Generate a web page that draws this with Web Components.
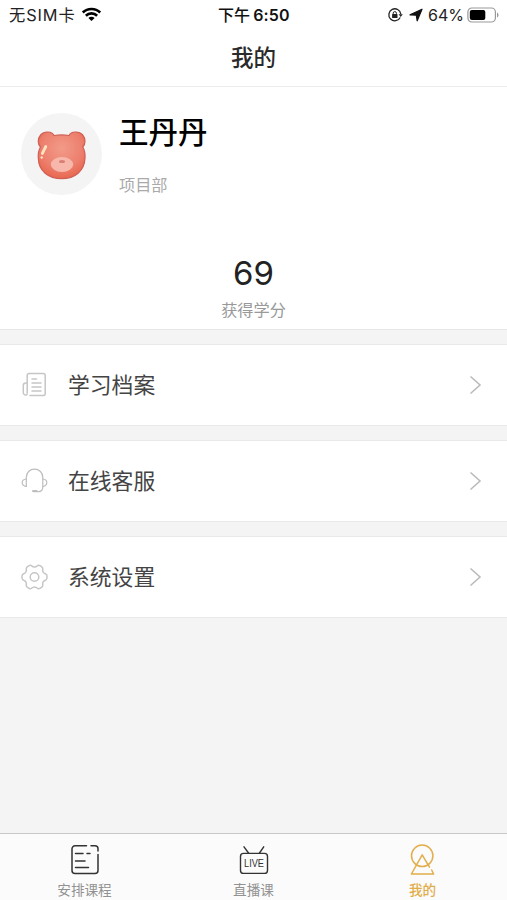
<!DOCTYPE html>
<html lang="zh-CN">
<head>
<meta charset="utf-8">
<meta name="viewport" content="width=device-width, initial-scale=1">
<title>我的</title>
<style>
  body{
    margin: 0;
    font-family: Inter, "Noto Sans CJK SC", sans-serif;
    background-color: #f4f4f4;
  }
</style>
</head>
<body>
<profile-page>
  <status-bar slot="top" carrier="无SIM卡" time="6:50" battery="64%"></status-bar>
  <nav-header slot="top">我的</nav-header>
  <user-card slot="content" score="69">
    <span slot="name">王丹丹</span>
    <span slot="dept">项目部</span>
    <span slot="label">获得学分</span>
  </user-card>
  <menu-row slot="content" icon="archive">学习档案</menu-row>
  <menu-row slot="content" icon="service">在线客服</menu-row>
  <menu-row slot="content" icon="settings">系统设置</menu-row>
  <tab-bar slot="bottom">
    <tab-item icon="course">安排课程</tab-item>
    <tab-item icon="live">直播课</tab-item>
    <tab-item icon="mine" active>我的</tab-item>
  </tab-bar>
</profile-page>

<script>
// outline of a cog with six rounded lobes, centred on 0,0
function gearPath(){
  const at = (deg, r)=>{
    const a = deg * Math.PI / 180;
    return `${(r * Math.cos(a)).toFixed(2)} ${(r * Math.sin(a)).toFixed(2)}`;
  };
  let d = `M${at(-15, 11.7)}`;
  for(let deg = 0; deg < 360; deg += 60){
    d += `C${at(deg - 10, 13.2)} ${at(deg + 10, 13.2)} ${at(deg + 15, 11.7)}`;
    d += `Q${at(deg + 30, 8.6)} ${at(deg + 45, 11.7)}`;
  }
  return d + 'Z';
}

const icons = {
  archive: `
    <svg width="28" height="28" viewBox="0 0 28 28" fill="none" stroke="#c6c6c6" stroke-width="1.5" stroke-linecap="round" stroke-linejoin="round">
      <path d="M7.200 22V4.500a2 2 0 0 1 2-2h14a2 2 0 0 1 2 2v18a2 2 0 0 1-2 2H10"/>
      <path d="M7.200 12H5.800a2.500 2.500 0 0 0-2.500 2.500v7.500a2.300 2.300 0 0 0 3.900 1.300"/>
      <path d="M12 8h4.500M12 12h9M12 16h9M12 20h9"/>
    </svg>`,
  service: `
    <svg width="28" height="28" viewBox="0 0 28 28" fill="none" stroke="#bdbdbd" stroke-width="1.200" stroke-linecap="round" stroke-linejoin="round">
      <path d="M6.300 19.500V10.500C6.300 5.500 9.800 2.200 14.500 2.200s8.300 3.300 8.300 8.300v9.500c0 3-1.500 4.700-4.500 4.700h-4.500"/>
      <path d="M6.300 12C3.500 12.300 2.200 13.700 2.200 15.600s1.300 3.500 4.100 3.900M22.800 12c2.800.3 4 1.700 4 3.600s-1.200 3.500-4 3.900"/>
      <path d="M13 24h3.500" stroke-width="2"/>
    </svg>`,
  settings: `
    <svg width="28" height="28" viewBox="-14.500 -14 28 28" fill="none" stroke="#c6c6c6" stroke-width="1.500" stroke-linejoin="round">
      <path d="${gearPath()}"/>
      <circle r="4.300"/>
    </svg>`,
  course: `
    <svg width="32" height="32" viewBox="0 0 32 32" fill="none" stroke="#333" stroke-width="1.500" stroke-linecap="round">
      <path d="M17.500 2.800H6a3 3 0 0 0-3 3v21.700a3 3 0 0 0 3 3h20a3 3 0 0 0 3-3V11.500M22 2.800h4a3 3 0 0 1 3 3v2.200"/>
      <path d="M6.500 10.500h7.500M18 10.500h3M6.500 18h9.500M6.500 24.500h13"/>
    </svg>`,
  live: `
    <svg width="32" height="32" viewBox="0 0 32 32" fill="none" stroke="#333" stroke-width="1.400" stroke-linecap="round">
      <rect x="2.500" y="10.400" width="27" height="20" rx="3"/>
      <path d="M10.500 10L6 3.800M21.500 10l4.200-6.200"/>
      <text x="16" y="24" text-anchor="middle" font-family="Liberation Sans, sans-serif" font-size="10.300" textLength="20" lengthAdjust="spacingAndGlyphs" fill="#333" stroke="none">LIVE</text>
    </svg>`,
  mine: `
    <svg width="32" height="32" viewBox="0 0 32 32" fill="none" stroke="#e2ae4c" stroke-width="1.500" stroke-linecap="round" stroke-linejoin="round">
      <circle cx="15.200" cy="12.800" r="10.700"/>
      <path d="M24.700 27l1.900 4H4.400L15.200 11.800l7.300 12.400"/>
    </svg>`
};

class ProfilePage extends HTMLElement{

  constructor(){
    super();
    const shadowRoot = this.attachShadow({mode:'open'});
    shadowRoot.innerHTML = `
      <style>
        :host{
          display: flex;
          flex-direction: column;
          height: 100vh;
          overflow: hidden;
        }

        main{
          flex: 1;
          min-height: 0;
          display: flex;
          flex-direction: column;
          gap: 14px;
        }
      </style>
      <slot name="top"></slot>
      <main><slot name="content"></slot></main>
      <slot name="bottom"></slot>
    `;
  }

}

class StatusBar extends HTMLElement{

  constructor(){
    super();
    const shadowRoot = this.attachShadow({mode:'open'});
    shadowRoot.innerHTML = `
      <style>
        :host{
          display: grid;
          grid-template-columns: 1fr auto 1fr;
          align-items: center;
          height: 29px;
          box-sizing: border-box;
          padding: 0 8px 0 9px;
          background-color: #fff;
          color: #222;
          font-size: 16px;
          line-height: 20px;
          white-space: nowrap;
        }

        div{
          display: flex;
          align-items: center;
        }

        #carrier{
          font-size: 16.300px;
          letter-spacing: 0.9px;
        }

        .time{
          font-weight: 600;
          color: #111;
          letter-spacing: 0.2px;
        }

        .time span{
          font-weight: 500;
          margin-right: 3px;
          letter-spacing: 0;
        }

        #time{
          font-weight: 600;
        }

        .right{
          justify-content: flex-end;
        }

        svg{
          flex: none;
        }
      </style>
      <div>
        <span id="carrier"></span>
        <svg width="21" height="15" viewBox="0 0 22 16" style="margin-left:5px" fill="none" stroke="#000" stroke-width="2.800">
          <path d="M1.700 5.900a13.200 13.200 0 0 1 18.600 0M5 9.300a8.500 8.500 0 0 1 12 0"/>
          <path d="M11 15l-3.300-3.300a4.700 4.700 0 0 1 6.600 0z" fill="#000" stroke="none"/>
        </svg>
      </div>
      <div class="time"><span>下午</span><b id="time"></b></div>
      <div class="right">
        <svg width="16" height="16" viewBox="0 0 16 16" fill="none" stroke="#222" stroke-width="1.300">
          <path d="M13.200 10.500A6 6 0 1 1 13.800 7"/>
          <path d="M11.600 7.200h4.200l-2.100 2.800z" fill="#222" stroke="none"/>
          <rect x="5.100" y="7.100" width="5.400" height="4" rx=".6" fill="#222" stroke="none"/>
          <path d="M6.200 7.500V6.200a1.600 1.600 0 0 1 3.200 0v1.300" stroke-width="1"/>
        </svg>
        <svg width="14" height="14" viewBox="0 0 14 14" style="margin:0 5px 0 6px">
          <path d="M13 1.200L8.200 12.800 7.300 7.200 1 6.800z" fill="#111" stroke="#111" stroke-width="1.200" stroke-linejoin="round"/>
        </svg>
        <span id="battery"></span>
        <svg width="32" height="16" viewBox="0 0 32 16" style="margin-left:3px">
          <rect x=".9" y="1" width="27.500" height="14" rx="4" fill="none" stroke="#999" stroke-width="1.200"/>
          <rect x="2.800" y="2.900" width="15.500" height="10.200" rx="2" fill="#000"/>
          <path d="M30 5.500c2 .8 2 4.200 0 5z" fill="#999"/>
        </svg>
      </div>
    `;
  }

  connectedCallback(){
    ['carrier', 'time', 'battery'].forEach((name)=>{
      this.shadowRoot.querySelector(`#${name}`).textContent = this.getAttribute(name);
    });
  }

}

class NavHeader extends HTMLElement{

  constructor(){
    super();
    const shadowRoot = this.attachShadow({mode:'open'});
    shadowRoot.innerHTML = `
      <style>
        :host{
          display: flex;
          justify-content: center;
          align-items: center;
          height: 58px;
          box-sizing: border-box;
          border-bottom: 1px solid #ececec;
          background-color: #fff;
          color: #2a2a2a;
          font-size: 22.500px;
          font-weight: 500;
          line-height: 32px;
        }
      </style>
      <slot></slot>
    `;
  }

}

class UserCard extends HTMLElement{

  constructor(){
    super();
    const shadowRoot = this.attachShadow({mode:'open'});
    shadowRoot.innerHTML = `
      <style>
        :host{
          display: block;
          height: 243px;
          box-sizing: border-box;
          border-bottom: 1px solid #e7e7e7;
          background-color: #fff;
        }

        .user{
          display: flex;
          gap: 17px;
          padding: 26px 21px 0;
          height: 140px;
        }

        .avatar{
          width: 81px;
          height: 82px;
          border-radius: 50%;
          background-color: #f4f4f4;
          flex: none;
        }

        .name{
          margin-top: -2px;
          font-size: 29.500px;
          font-weight: 500;
          line-height: 42px;
          color: #000;
        }

        .dept{
          margin-top: 20px;
          font-size: 16.200px;
          line-height: 24px;
          color: #aaa;
        }

        .score{
          text-align: center;
        }

        #score{
          font-size: 33px;
          line-height: 40px;
          color: #222;
        }

        .label{
          margin-top: 5px;
          font-size: 16.200px;
          line-height: 24px;
          color: #999;
        }
      </style>
      <div class="user">
        <div class="avatar">
          <svg width="81" height="82" viewBox="0 0 81 82">
            <defs>
              <radialGradient id="fur" cx=".5" cy=".35" r=".65">
                <stop offset="0" stop-color="#f29b88"/>
                <stop offset=".65" stop-color="#ed806f"/>
                <stop offset="1" stop-color="#e8684f"/>
              </radialGradient>
            </defs>
            <path d="M33 22.500Q40.500 21.300 48 22.500C50 18.300 58 17.600 61.700 22C65 26 64.500 31 61.800 34C63.500 37 64.300 41 64 45C63.500 58 54 65.600 40.700 65.600C27.500 65.600 17.500 58 17.300 45C17 41 17.700 37 19.500 34C16.700 31 16.300 26 19.600 22C23.300 17.600 31 18.300 33 22.500Z" fill="url(#fur)" stroke="#cf5f55" stroke-width="1.200"/>
            <ellipse cx="41" cy="51.500" rx="11.200" ry="7.500" fill="#f7b7aa"/>
            <ellipse cx="41" cy="48.500" rx="3" ry="1.500" fill="#d77f76"/>
            <path d="M24.800 33.500l-3.500 7" stroke="#ffe3bd" stroke-width="2.800" stroke-linecap="round"/>
            <circle cx="20.700" cy="44.500" r="1.200" fill="#ffe3bd"/>
          </svg>
        </div>
        <div>
          <div class="name"><slot name="name"></slot></div>
          <div class="dept"><slot name="dept"></slot></div>
        </div>
      </div>
      <div class="score">
        <div id="score"></div>
        <div class="label"><slot name="label"></slot></div>
      </div>
    `;
  }

  connectedCallback(){
    this.shadowRoot.querySelector('#score').textContent = this.getAttribute('score');
  }

}

class MenuRow extends HTMLElement{

  constructor(){
    super();
    const shadowRoot = this.attachShadow({mode:'open'});
    shadowRoot.innerHTML = `
      <style>
        :host{
          display: flex;
          align-items: center;
          height: 82px;
          box-sizing: border-box;
          padding: 0 25px 0 20px;
          border-top: 1px solid #e9e9e9;
          border-bottom: 1px solid #e9e9e9;
          background-color: #fff;
          color: #444;
          font-size: 21.800px;
          line-height: 32px;
        }

        #icon{
          display: flex;
          margin-right: 20px;
        }

        .label{
          flex: 1;
        }
      </style>
      <span id="icon"></span>
      <span class="label"><slot></slot></span>
      <svg width="13" height="20" viewBox="0 0 13 20" fill="none" stroke="#bbb" stroke-width="1.600">
        <path d="M1.500 1.500L11 10l-9.500 8.500"/>
      </svg>
    `;
  }

  connectedCallback(){
    this.shadowRoot.querySelector('#icon').innerHTML = icons[this.getAttribute('icon')];
  }

}

class TabBar extends HTMLElement{

  constructor(){
    super();
    const shadowRoot = this.attachShadow({mode:'open'});
    shadowRoot.innerHTML = `
      <style>
        :host{
          display: grid;
          grid-template-columns: repeat(3, 1fr);
          height: 67px;
          box-sizing: border-box;
          border-top: 1px solid #c8c8c8;
          background-color: #fbfbfb;
        }
      </style>
      <slot></slot>
    `;
  }

}

class TabItem extends HTMLElement{

  constructor(){
    super();
    const shadowRoot = this.attachShadow({mode:'open'});
    shadowRoot.innerHTML = `
      <style>
        :host{
          display: flex;
          flex-direction: column;
          align-items: center;
          padding-top: 9px;
          color: #929292;
          font-size: 13.600px;
          line-height: 20px;
        }

        :host([active]){
          color: #e2ae4c;
          font-weight: 500;
        }

        #icon{
          display: flex;
          margin-bottom: 5px;
        }
      </style>
      <span id="icon"></span>
      <slot></slot>
    `;
  }

  connectedCallback(){
    this.shadowRoot.querySelector('#icon').innerHTML = icons[this.getAttribute('icon')];
  }

}

customElements.define('profile-page', ProfilePage);
customElements.define('status-bar', StatusBar);
customElements.define('nav-header', NavHeader);
customElements.define('user-card', UserCard);
customElements.define('menu-row', MenuRow);
customElements.define('tab-bar', TabBar);
customElements.define('tab-item', TabItem);
</script>
</body>
</html>
